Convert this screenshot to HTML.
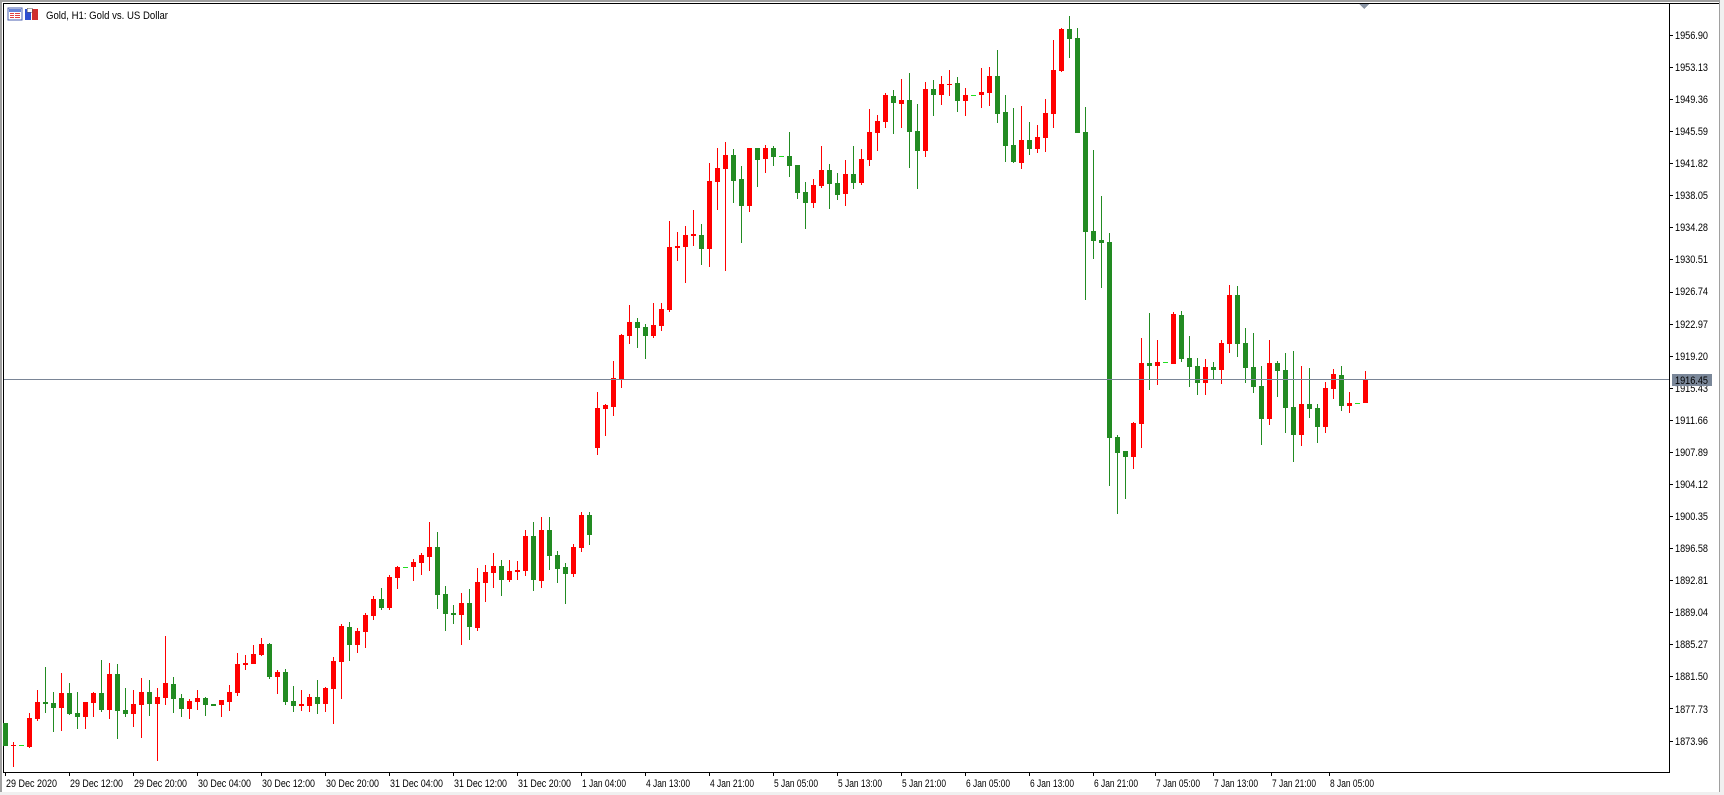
<!DOCTYPE html>
<html><head><meta charset="utf-8"><style>
html,body{margin:0;padding:0;width:1724px;height:795px;overflow:hidden;background:#fff;font-family:"Liberation Sans",sans-serif;}
svg{position:absolute;left:0;top:0}
svg text{font-family:"Liberation Sans",sans-serif;font-size:11px;fill:#000}
#xl text{font-size:11px}
</style></head><body>
<svg width="1724" height="795" viewBox="0 0 1724 795" xmlns="http://www.w3.org/2000/svg" shape-rendering="crispEdges">
<rect x="0" y="0" width="1724" height="795" fill="#fff"/>
<rect x="0" y="0" width="1724" height="2" fill="#a0a0a0"/>
<rect x="0" y="0" width="2" height="795" fill="#a0a0a0"/>
<rect x="1719" y="0" width="5" height="795" fill="#f0f0f0"/>
<rect x="1719" y="0" width="1" height="795" fill="#a0a0a0"/>
<rect x="0" y="792" width="1724" height="3" fill="#f0f0f0"/>
<rect x="3" y="3" width="1716" height="1" fill="#000"/>
<rect x="3" y="3" width="1" height="770" fill="#000"/>
<rect x="1669" y="4" width="1" height="769" fill="#000"/>
<rect x="3" y="772" width="1667" height="1" fill="#000"/>
<polygon points="1359,4 1369,4 1364,9" fill="#8a95a5"/>
<rect x="8" y="8" width="14" height="12" fill="#fff" stroke="#4a5fb0"/>
<rect x="9" y="9" width="12" height="3" fill="#6a86d8"/>
<rect x="10" y="13" width="4" height="1" fill="#e04040"/><rect x="15" y="13" width="5" height="1" fill="#e04040"/>
<rect x="10" y="15" width="4" height="1" fill="#e04040"/><rect x="15" y="15" width="5" height="1" fill="#e04040"/>
<rect x="10" y="17" width="4" height="1" fill="#e04040"/><rect x="15" y="17" width="5" height="1" fill="#e04040"/>
<rect x="25" y="9" width="6" height="11" fill="#2f4fd0"/>
<rect x="32" y="9" width="6" height="11" fill="#d03030"/>
<rect x="27" y="8" width="5" height="4" fill="#fff" stroke="#555" stroke-width="0.5"/>
<text x="46" y="19" textLength="122" lengthAdjust="spacingAndGlyphs">Gold, H1:  Gold vs. US Dollar</text>
<g id="candles"></g>
<rect x="4" y="379" width="1665" height="1" fill="#7a8596"/>
<g id="yax"></g>
<rect x="1672" y="374" width="40" height="12" fill="#7a8799"/>
<text x="1675" y="384" style="fill:#fff" textLength="33" lengthAdjust="spacingAndGlyphs">1916.45</text>
<g id="xl">
<text x="6" y="787" textLength="51" lengthAdjust="spacingAndGlyphs">29 Dec 2020</text>
<text x="70" y="787" textLength="53" lengthAdjust="spacingAndGlyphs">29 Dec 12:00</text>
<text x="134" y="787" textLength="53" lengthAdjust="spacingAndGlyphs">29 Dec 20:00</text>
<text x="198" y="787" textLength="53" lengthAdjust="spacingAndGlyphs">30 Dec 04:00</text>
<text x="262" y="787" textLength="53" lengthAdjust="spacingAndGlyphs">30 Dec 12:00</text>
<text x="326" y="787" textLength="53" lengthAdjust="spacingAndGlyphs">30 Dec 20:00</text>
<text x="390" y="787" textLength="53" lengthAdjust="spacingAndGlyphs">31 Dec 04:00</text>
<text x="454" y="787" textLength="53" lengthAdjust="spacingAndGlyphs">31 Dec 12:00</text>
<text x="518" y="787" textLength="53" lengthAdjust="spacingAndGlyphs">31 Dec 20:00</text>
<text x="582" y="787" textLength="44" lengthAdjust="spacingAndGlyphs">1 Jan 04:00</text>
<text x="646" y="787" textLength="44" lengthAdjust="spacingAndGlyphs">4 Jan 13:00</text>
<text x="710" y="787" textLength="44" lengthAdjust="spacingAndGlyphs">4 Jan 21:00</text>
<text x="774" y="787" textLength="44" lengthAdjust="spacingAndGlyphs">5 Jan 05:00</text>
<text x="838" y="787" textLength="44" lengthAdjust="spacingAndGlyphs">5 Jan 13:00</text>
<text x="902" y="787" textLength="44" lengthAdjust="spacingAndGlyphs">5 Jan 21:00</text>
<text x="966" y="787" textLength="44" lengthAdjust="spacingAndGlyphs">6 Jan 05:00</text>
<text x="1030" y="787" textLength="44" lengthAdjust="spacingAndGlyphs">6 Jan 13:00</text>
<text x="1094" y="787" textLength="44" lengthAdjust="spacingAndGlyphs">6 Jan 21:00</text>
<text x="1156" y="787" textLength="44" lengthAdjust="spacingAndGlyphs">7 Jan 05:00</text>
<text x="1214" y="787" textLength="44" lengthAdjust="spacingAndGlyphs">7 Jan 13:00</text>
<text x="1272" y="787" textLength="44" lengthAdjust="spacingAndGlyphs">7 Jan 21:00</text>
<text x="1330" y="787" textLength="44" lengthAdjust="spacingAndGlyphs">8 Jan 05:00</text>
</g>
<g id="xt"></g>
<g id="yl"></g>
</svg>
<script>
var D=`g 723 746 723 746
r 742 767 745 746
d 745
r 713 748 718 747
r 690 721 702 719
g 667 713 702 704
g 692 732 703 708
r 673 731 693 708
g 683 715 693 714
g 692 729 713 717
r 702 729 702 717
r 692 717 693 703
g 660 712 693 710
r 663 719 674 710
g 664 739 674 711
g 688 717 710 714
r 690 727 704 714
r 678 738 692 705
g 680 716 692 704
r 688 761 697 704
r 636 705 683 698
g 677 713 684 699
g 694 717 698 709
r 699 719 701 709
r 690 710 698 702
g 697 716 698 705
g 704 706 704 706
r 700 717 700 705
r 685 711 692 702
r 653 696 664 693
r 655 670 663 665
r 645 664 654 664
r 638 656 644 655
g 643 679 644 677
r 670 694 672 677
g 669 705 672 702
g 686 712 701 706
r 690 711 704 706
r 694 712 697 706
g 680 714 697 704
r 687 712 688 704
r 657 724 661 689
r 624 699 626 662
g 622 661 627 645
r 628 653 631 645
r 613 648 615 632
r 596 620 599 616
g 588 610 599 608
r 575 610 577 608
r 566 589 567 578
d 567
r 559 581 562 567
r 553 575 555 563
r 522 571 547 557
g 532 609 547 595
g 586 631 594 614
g 605 624 613 615
r 593 645 603 615
g 589 640 603 627
r 568 631 582 628
r 565 602 572 583
r 553 588 566 573
g 560 596 566 580
r 560 582 571 580
r 561 580 570 572
r 530 576 536 571
g 522 591 536 580
r 517 588 530 581
g 517 570 530 556
g 551 583 555 569
g 563 604 567 574
r 544 577 547 574
r 512 552 515 548
g 512 545 515 535
r 392 455 408 448
r 404 436 405 409
r 361 416 378 407
r 334 388 335 379
r 305 344 322 336
g 318 348 322 328
g 324 359 327 336
r 303 338 325 336
r 303 331 309 326
r 221 312 247 310
r 232 261 246 248
r 226 283 235 247
r 210 246 234 236
g 224 265 235 249
r 163 267 181 249
r 148 210 168 182
r 142 271 155 169
g 149 203 155 181
g 166 243 179 206
r 148 212 148 206
g 148 187 148 160
r 145 173 148 159
g 146 166 148 157
d 156
g 132 177 156 166
g 165 199 165 193
g 182 229 192 203
r 179 208 185 203
r 146 188 170 186
g 164 209 170 184
g 173 200 183 195
r 160 206 174 194
g 146 189 174 183
r 149 185 159 183
r 109 166 132 160
r 115 151 121 133
r 93 128 95 122
g 90 134 96 103
r 79 128 100 104
g 73 168 100 132
g 104 189 131 151
r 82 157 89 151
g 80 116 89 95
r 76 105 84 95
r 70 96 84 85
g 77 112 83 101
r 88 116 95 101
d 95
r 68 108 92 95
r 67 106 76 93
g 50 123 76 114
g 95 162 112 146
g 108 163 145 162
r 106 169 140 163
g 122 155 140 149
r 125 153 137 149
r 99 152 113 138
r 40 128 70 114
r 28 72 29 71
g 16 58 29 39
g 28 133 38 133
g 107 300 132 232
g 150 259 231 241
g 196 288 240 243
g 233 486 242 438
g 435 514 437 453
g 451 499 451 457
r 422 469 423 457
r 338 448 363 424
g 313 390 363 366
r 340 385 362 366
d 362
r 312 364 314 364
g 311 362 315 359
g 336 387 358 367
g 358 395 366 383
r 359 395 367 383
g 362 379 367 370
r 340 384 343 370
r 285 353 295 344
g 286 357 295 344
g 328 383 343 368
g 333 393 367 387
g 366 445 386 419
r 340 425 363 419
g 361 397 363 371
g 353 433 370 408
g 351 462 407 435
r 366 446 404 435
g 368 418 404 409
g 404 443 408 427
r 382 433 388 427
r 369 399 374 389
g 366 411 375 406
r 392 413 403 406
d 403
r 371 403 379 403`.split("\n");
var NS="http://www.w3.org/2000/svg",g=document.getElementById("candles");
function R(p,x,y,w,h,c){var r=document.createElementNS(NS,"rect");r.setAttribute("x",x);r.setAttribute("y",y);r.setAttribute("width",w);r.setAttribute("height",Math.max(1,h));r.setAttribute("fill",c);p.appendChild(r);}
D.forEach(function(l,i){var a=l.trim().split(/\s+/),x=5+8*i;
if(a[0]=="d"){R(g,x-2,+a[1],5,1,"#22dd22");return;}
var c=a[0]=="r"?"#ff0000":"#228b22";
R(g,x,+a[1],1,+a[2]-+a[1],c);
R(g,x-2,+a[3],5,+a[4]-+a[3],c);});
var yx=document.getElementById("yax");
for(var k=0;k<23;k++){var y=Math.round(35+k*32.07);R(yx,1669,y,4,1,"#000");}
var xt=document.getElementById("xt");
var xs=[5,69,133,197,261,325,389,453,517,581,645,709,773,837,901,965,1029,1093,1155,1213,1271,1329];
xs.forEach(function(x){R(xt,x,772,1,4,"#000");});
</script>
<svg width="1724" height="795" style="pointer-events:none" xmlns="http://www.w3.org/2000/svg">
<g font-family="Liberation Sans" font-size="11">
<text x="1675" y="39" textLength="33" lengthAdjust="spacingAndGlyphs">1956.90</text>
<text x="1675" y="71" textLength="33" lengthAdjust="spacingAndGlyphs">1953.13</text>
<text x="1675" y="103" textLength="33" lengthAdjust="spacingAndGlyphs">1949.36</text>
<text x="1675" y="135" textLength="33" lengthAdjust="spacingAndGlyphs">1945.59</text>
<text x="1675" y="167" textLength="33" lengthAdjust="spacingAndGlyphs">1941.82</text>
<text x="1675" y="199" textLength="33" lengthAdjust="spacingAndGlyphs">1938.05</text>
<text x="1675" y="231" textLength="33" lengthAdjust="spacingAndGlyphs">1934.28</text>
<text x="1675" y="263" textLength="33" lengthAdjust="spacingAndGlyphs">1930.51</text>
<text x="1675" y="295" textLength="33" lengthAdjust="spacingAndGlyphs">1926.74</text>
<text x="1675" y="328" textLength="33" lengthAdjust="spacingAndGlyphs">1922.97</text>
<text x="1675" y="360" textLength="33" lengthAdjust="spacingAndGlyphs">1919.20</text>
<text x="1675" y="392" textLength="33" lengthAdjust="spacingAndGlyphs">1915.43</text>
<text x="1675" y="424" textLength="33" lengthAdjust="spacingAndGlyphs">1911.66</text>
<text x="1675" y="456" textLength="33" lengthAdjust="spacingAndGlyphs">1907.89</text>
<text x="1675" y="488" textLength="33" lengthAdjust="spacingAndGlyphs">1904.12</text>
<text x="1675" y="520" textLength="33" lengthAdjust="spacingAndGlyphs">1900.35</text>
<text x="1675" y="552" textLength="33" lengthAdjust="spacingAndGlyphs">1896.58</text>
<text x="1675" y="584" textLength="33" lengthAdjust="spacingAndGlyphs">1892.81</text>
<text x="1675" y="616" textLength="33" lengthAdjust="spacingAndGlyphs">1889.04</text>
<text x="1675" y="648" textLength="33" lengthAdjust="spacingAndGlyphs">1885.27</text>
<text x="1675" y="680" textLength="33" lengthAdjust="spacingAndGlyphs">1881.50</text>
<text x="1675" y="713" textLength="33" lengthAdjust="spacingAndGlyphs">1877.73</text>
<text x="1675" y="745" textLength="33" lengthAdjust="spacingAndGlyphs">1873.96</text>
</g>
<rect x="1672" y="374" width="40" height="12" fill="#7a8799"/>
<text x="1675" y="384" font-family="Liberation Sans" font-size="11" fill="#fff" textLength="33" lengthAdjust="spacingAndGlyphs">1916.45</text>
</svg>
</body></html>
